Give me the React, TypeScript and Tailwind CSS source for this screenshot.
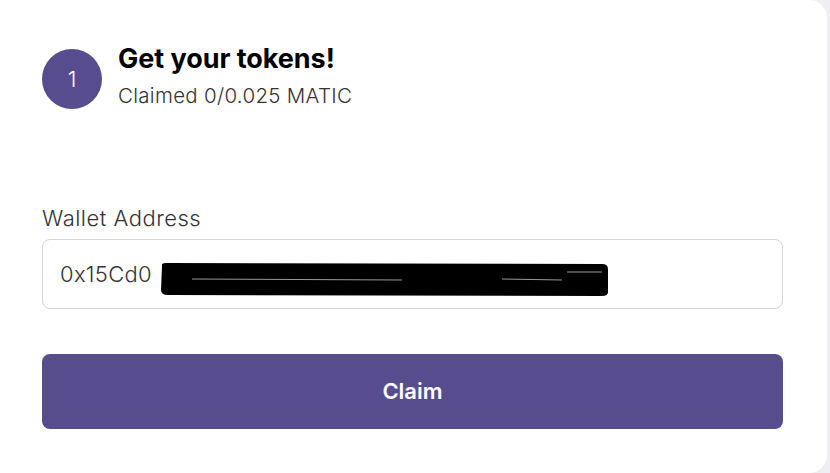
export default function App() {
  return (
    <div className="w-[830px] h-[473px] bg-[#eeeef3] font-['Inter',sans-serif]">
      <div className="w-[827px] h-[473px] bg-white rounded-r-[18px] px-[42px] pt-[49px]">
        <div className="flex items-start gap-4">
          <div className="w-[60px] h-[60px] rounded-full bg-[#574c8e] text-white flex items-center justify-center text-[22px] font-light shrink-0">
            1
          </div>
          <div className="flex flex-col">
            <div className="text-[27px] font-bold text-black leading-[28px] mt-[-4px] tracking-[-0.05px]">
              Get your tokens!
            </div>
            <div className="text-[20.5px] font-light text-[#333] leading-[24px] mt-[11px] tracking-[0.3px]">
              Claimed 0/0.025 MATIC
            </div>
          </div>
        </div>

        <div className="mt-[96px] text-[22px] font-light text-[#333] leading-[26px] tracking-[0.5px]">
          Wallet Address
        </div>
        <div className="mt-[8px] h-[70px] w-[741px] border border-[#d6d6d6] rounded-[8px] flex items-center px-[17px] relative">
          <span className="text-[22px] font-light text-[#333] tracking-[0.3px]">0x15Cd0</span>
          <svg
            className="absolute left-[115px] top-[22px]"
            width="452"
            height="36"
            viewBox="0 0 452 36"
          >
            <path
              d="M4 4 Q3 1 8 1 L444 2 Q450 2 450 7 L450 30 Q450 34 444 34 L10 33 Q3 33 3 28 Z"
              fill="#000"
            />
            <path d="M34 17 L244 18" stroke="#fff" strokeWidth="1" opacity="0.6" />
            <path d="M344 17 L404 18 M409 10 L444 10" stroke="#fff" strokeWidth="1" opacity="0.6" />
          </svg>
        </div>

        <button className="mt-[45px] w-[741px] h-[75px] rounded-[8px] bg-[#574c8e] text-white text-[22px] font-semibold">
          Claim
        </button>
      </div>
    </div>
  );
}
